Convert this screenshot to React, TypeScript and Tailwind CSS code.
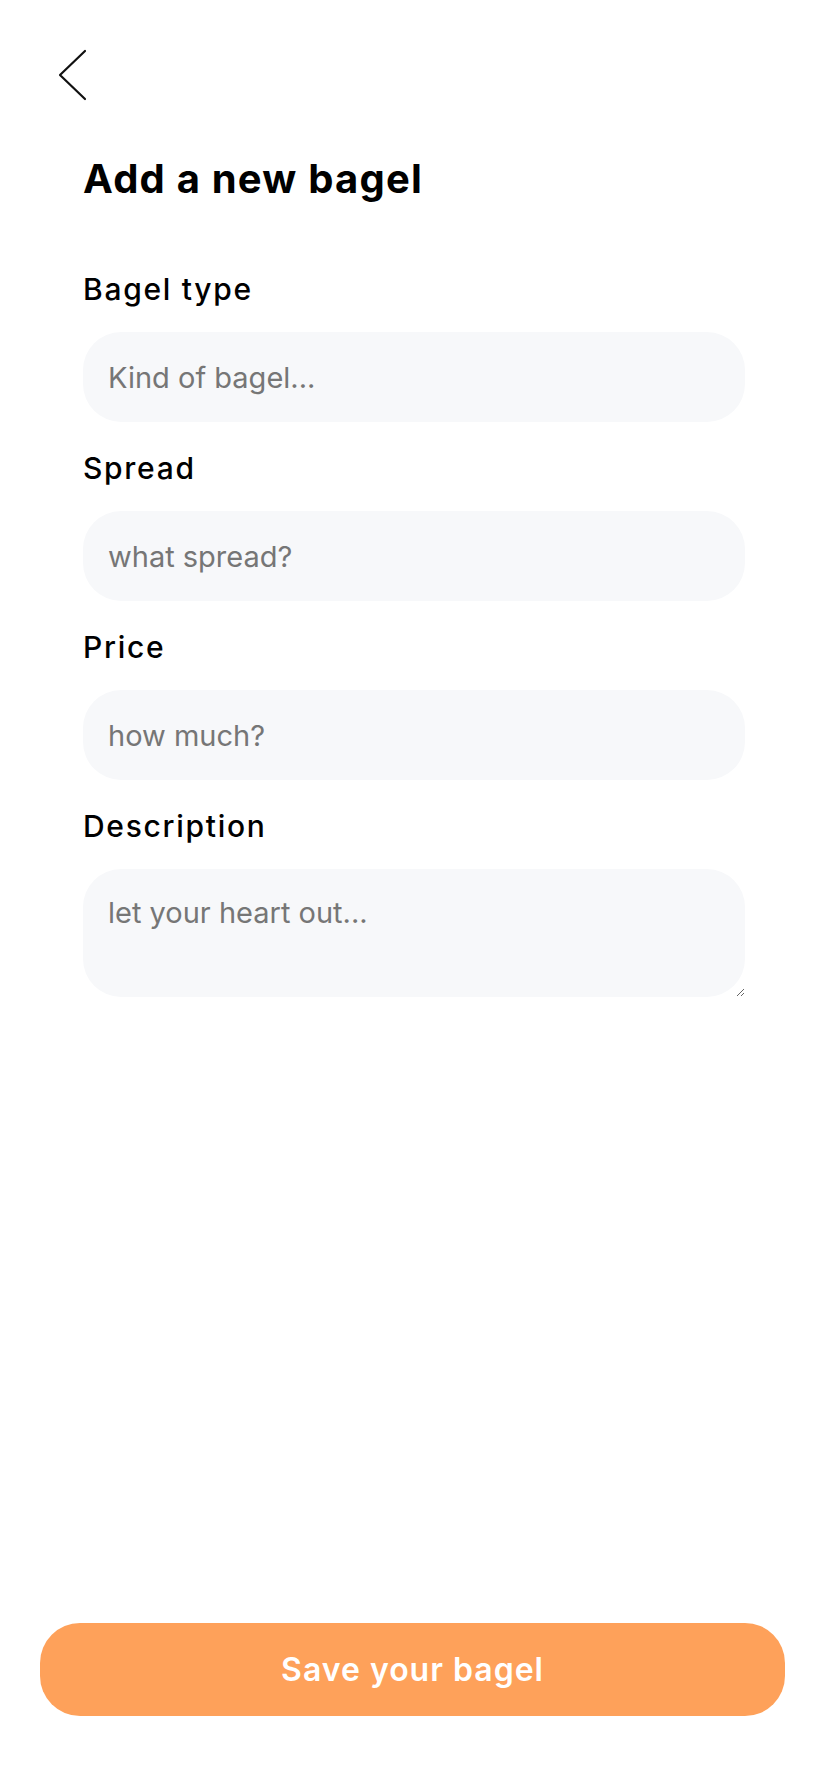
import React from "react";

function Field({ label, placeholder }: { label: string; placeholder: string }) {
  return (
    <div className="flex flex-col">
      <label className="text-[30px] leading-[36px] font-medium tracking-[1.7px] text-black">{label}</label>
      <input
        placeholder={placeholder}
        className="mt-[25px] h-[90px] w-full rounded-[38px] bg-[#f7f8fa] px-[25px] text-[29px] text-black outline-none placeholder:text-[#767676]"
      />
    </div>
  );
}

export default function App() {
  return (
    <div
      className="relative flex min-h-[1792px] w-full flex-col bg-white"
      style={{ fontFamily: "Inter, 'Noto Sans', sans-serif" }}
    >
      <button className="ml-[58px] mt-[49px] flex h-[52px] w-[30px] items-center justify-center" aria-label="Back">
        <svg width="30" height="52" viewBox="0 0 30 52" fill="none">
          <polyline points="27,2 2,26 27,50" stroke="#111" strokeWidth="2.2" strokeLinecap="round" strokeLinejoin="round" />
        </svg>
      </button>

      <div className="flex flex-col px-[83px]">
        <h1 className="mt-[54px] text-[40px] leading-[48px] font-bold tracking-[1.2px] text-black">Add a new bagel</h1>

        <div className="mt-[68px] flex flex-col gap-[28px]">
          <Field label="Bagel type" placeholder="Kind of bagel..." />
          <Field label="Spread" placeholder="what spread?" />
          <Field label="Price" placeholder="how much?" />
          <div className="flex flex-col">
            <label className="text-[30px] leading-[36px] font-medium tracking-[1.7px] text-black">Description</label>
            <textarea
              placeholder="let your heart out..."
              className="mt-[25px] h-[128px] w-full rounded-[38px] bg-[#f7f8fa] px-[25px] pt-[22px] text-[29px] text-black outline-none placeholder:text-[#767676]"
            />
          </div>
        </div>
      </div>

      <button className="ml-[40px] mr-[43px] mt-auto mb-[76px] h-[93px] rounded-[40px] bg-[#fea15a] text-[32px] font-semibold tracking-[1px] text-white">
        Save your bagel
      </button>
    </div>
  );
}
